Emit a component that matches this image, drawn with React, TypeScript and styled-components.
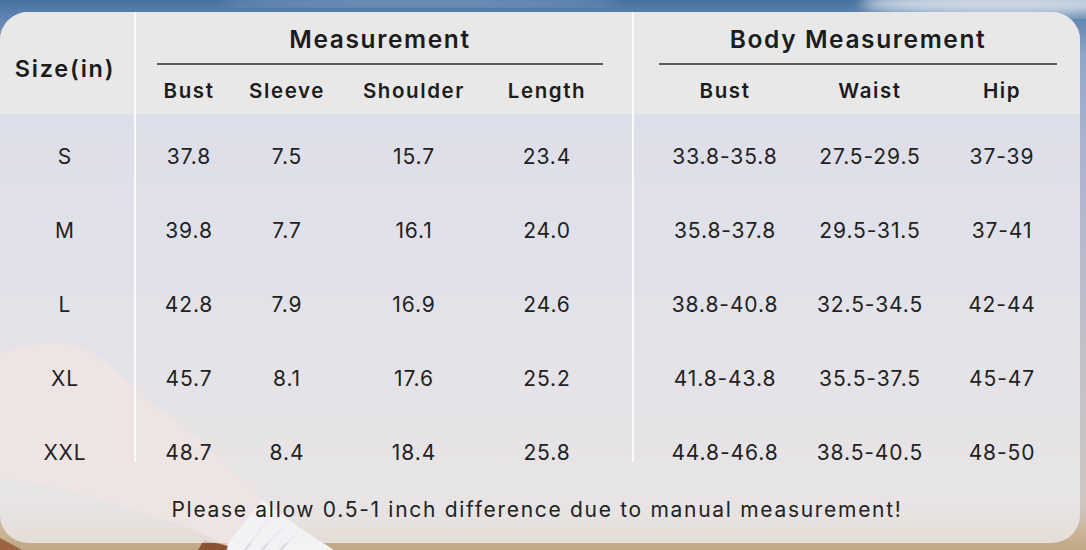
import React from 'react';
import styled, { createGlobalStyle } from 'styled-components';

const GlobalStyle = createGlobalStyle`
  html, body {
    margin: 0;
    padding: 0;
  }
  body {
    font-family: Inter, "Noto Sans", "DejaVu Sans", sans-serif;
    background: #c9bda9;
    overflow: hidden;
  }
`;

const Scene = styled('div')`
  position: relative;
  width: 1086px;
  height: 550px;
  padding-top: 12px;
  box-sizing: border-box;
  overflow: hidden;
`;

const Backdrop = styled('svg')`
  position: absolute;
  left: 0;
  top: 0;
  width: 1086px;
  height: 550px;
`;

const Card = styled('div')`
  position: relative;
  width: 1080px;
  height: 531px;
  border-radius: 28px;
  overflow: hidden;
  background: rgba(241, 240, 244, 0.72);
  display: flex;
  flex-direction: column;
  color: #1c1c1c;
`;

const Table = styled('div')`
  display: flex;
  height: 450px;
  flex-shrink: 0;
`;

const Section = styled('div')<{ $width: number; $divider?: boolean }>`
  width: ${p => p.$width}px;
  box-sizing: border-box;
  border-right: ${p => (p.$divider ? '2px solid #fbfbfd' : 'none')};
  display: flex;
  flex-direction: column;
`;

const HeaderBlock = styled('div')`
  height: 102px;
  background: #e8e8e8;
  flex-shrink: 0;
  display: flex;
  flex-direction: column;
`;

const SizeLabel = styled('div')`
  flex: 1;
  display: flex;
  align-items: center;
  justify-content: center;
  padding: 10px 4px 0 0;
  font-size: 23.5px;
  font-weight: 600;
  letter-spacing: 1.8px;
`;

const GroupTitle = styled('div')<{ $left: number; $right: number }>`
  height: 49px;
  margin: 0 ${p => p.$right}px 0 ${p => p.$left}px;
  border-bottom: 2px solid #5a5a5a;
  display: flex;
  align-items: center;
  justify-content: center;
  padding-top: 2px;
  font-size: 24.5px;
  font-weight: 600;
  letter-spacing: 1.6px;
`;

const SubRow = styled('div')<{ $cols: string }>`
  flex: 1;
  display: grid;
  grid-template-columns: ${p => p.$cols};
  align-items: center;
  padding-top: 2px;
  font-size: 20.5px;
  font-weight: 600;
  letter-spacing: 1.6px;
  text-align: center;
`;

const BodyGrid = styled('div')<{ $cols: string }>`
  display: grid;
  grid-template-columns: ${p => p.$cols};
  grid-template-rows: 52px repeat(4, 74px);
  align-items: end;
  font-size: 21px;
  font-weight: 400;
  line-height: 18px;
  letter-spacing: 0.9px;
  text-align: center;
  color: #222;
`;

const Cell = styled('div')<{ $shift?: number }>`
  white-space: nowrap;
  padding-right: ${p => p.$shift ?? 0}px;
`;

const Footnote = styled('div')`
  flex: 1;
  display: flex;
  justify-content: center;
  padding: 36px 6px 0 0;
  font-size: 21px;
  line-height: 24px;
  letter-spacing: 1.7px;
  color: #222;
`;

const sizes = ['S', 'M', 'L', 'XL', 'XXL'];

const garment = [
  ['37.8', '7.5', '15.7', '23.4'],
  ['39.8', '7.7', '16.1', '24.0'],
  ['42.8', '7.9', '16.9', '24.6'],
  ['45.7', '8.1', '17.6', '25.2'],
  ['48.7', '8.4', '18.4', '25.8'],
];

const body = [
  ['33.8-35.8', '27.5-29.5', '37-39'],
  ['35.8-37.8', '29.5-31.5', '37-41'],
  ['38.8-40.8', '32.5-34.5', '42-44'],
  ['41.8-43.8', '35.5-37.5', '45-47'],
  ['44.8-46.8', '38.5-40.5', '48-50'],
];

const measureCols = '106px 90px 164px 102px 1fr';
const bodyCols = '182px 108px 156px';

const BeachPhoto = () => (
  <Backdrop viewBox="0 0 1086 550">
    <defs>
      <linearGradient id="sky" x1="0" y1="0" x2="0" y2="1">
        <stop offset="0" stopColor="#44709f" />
        <stop offset="0.03" stopColor="#5d84b0" />
        <stop offset="0.1" stopColor="#93a6c6" />
        <stop offset="0.25" stopColor="#aab3cc" />
        <stop offset="0.5" stopColor="#b9bccc" />
        <stop offset="0.75" stopColor="#c8c2c6" />
        <stop offset="0.92" stopColor="#cfc6c1" />
        <stop offset="0.97" stopColor="#c9b596" />
        <stop offset="1" stopColor="#bfa583" />
      </linearGradient>
      <filter id="soft">
        <feGaussianBlur stdDeviation="6" />
      </filter>
    </defs>
    <rect width="1086" height="550" fill="url(#sky)" />
    <ellipse cx="1000" cy="4" rx="140" ry="12" fill="#cdd8e4" filter="url(#soft)" />
    <ellipse cx="420" cy="2" rx="200" ry="5" fill="#7d9cc0" filter="url(#soft)" />
    <path
      d="M0 354 C22 345 52 340 78 346 C96 352 112 368 140 393 L200 440 L262 500 L226 546 C200 530 170 520 140 512 C100 498 60 486 0 478 Z"
      fill="#e6c6b8"
    />
    <path d="M262 500 L300 528 L334 550 L228 550 L226 546 Z" fill="#f3f2f4" />
    <path d="M245 550 L268 520 M262 550 L282 528 M280 550 L296 535" stroke="#d9d9de" strokeWidth="2" />
    <path d="M198 550 L204 540 L228 546 L226 550 Z" fill="#8a5232" />
    <path d="M0 538 L22 550 L0 550 Z" fill="#9c6440" />
  </Backdrop>
);

export default function App() {
  return (
    <Scene>
      <GlobalStyle />
      <BeachPhoto />
      <Card>
        <Table>
          <Section $width={136} $divider>
            <HeaderBlock>
              <SizeLabel>Size(in)</SizeLabel>
            </HeaderBlock>
            <BodyGrid $cols="1fr">
              {sizes.map(s => (
                <Cell key={s} $shift={4}>
                  {s}
                </Cell>
              ))}
            </BodyGrid>
          </Section>

          <Section $width={498} $divider>
            <HeaderBlock>
              <GroupTitle $left={21} $right={29}>
                Measurement
              </GroupTitle>
              <SubRow $cols={measureCols}>
                <div>Bust</div>
                <div>Sleeve</div>
                <div>Shoulder</div>
                <div>Length</div>
                <div />
              </SubRow>
            </HeaderBlock>
            <BodyGrid $cols={measureCols}>
              {garment.map((row, i) => (
                <React.Fragment key={i}>
                  {row.map((v, j) => (
                    <Cell key={j}>{v}</Cell>
                  ))}
                  <div />
                </React.Fragment>
              ))}
            </BodyGrid>
          </Section>

          <Section $width={446}>
            <HeaderBlock>
              <GroupTitle $left={25} $right={23}>
                Body Measurement
              </GroupTitle>
              <SubRow $cols={bodyCols}>
                <div>Bust</div>
                <div>Waist</div>
                <div>Hip</div>
              </SubRow>
            </HeaderBlock>
            <BodyGrid $cols={bodyCols}>
              {body.map((row, i) => (
                <React.Fragment key={i}>
                  {row.map((v, j) => (
                    <Cell key={j}>{v}</Cell>
                  ))}
                </React.Fragment>
              ))}
            </BodyGrid>
          </Section>
        </Table>
        <Footnote>Please allow 0.5-1 inch difference due to manual measurement!</Footnote>
      </Card>
    </Scene>
  );
}
